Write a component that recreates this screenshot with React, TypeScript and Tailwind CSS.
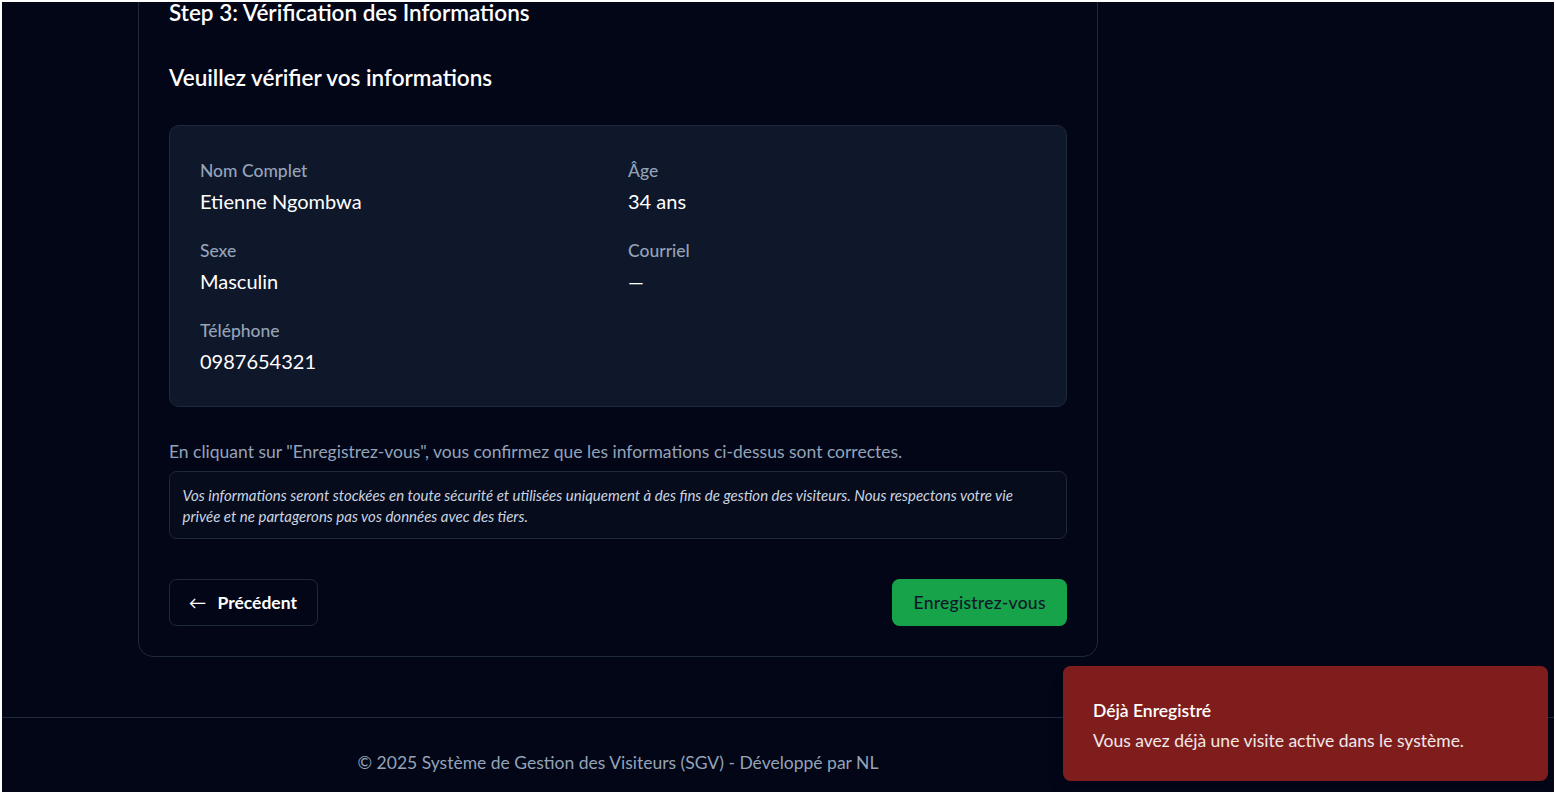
import React from "react";

const fields = [
  { label: "Nom Complet", value: "Etienne Ngombwa" },
  { label: "Âge", value: "34 ans" },
  { label: "Sexe", value: "Masculin" },
  { label: "Courriel", value: "—" },
  { label: "Téléphone", value: "0987654321" },
];

function InfoItem({ label, value }: { label: string; value: string }) {
  return (
    <div>
      <p className="pt-[1.5px] text-sm leading-5 font-medium text-[#94a3b8]">{label}</p>
      <p className="mt-[2.5px] text-base leading-6 text-white">{value}</p>
    </div>
  );
}

function Toast() {
  return (
    <div className="absolute right-[4.8px] bottom-[8.5px] w-[388px] rounded-md bg-[#7f1d1d] px-6 pt-[25.6px] pb-[22.4px] pr-8 shadow-lg">
      <div className="grid gap-1">
        <p className="text-sm leading-5 font-semibold text-white">Déjà Enregistré</p>
        <p className="text-sm leading-5 text-white/90">
          Vous avez déjà une visite active dans le système.
        </p>
      </div>
    </div>
  );
}

export default function App() {
  return (
    <div
      className="h-screen overflow-hidden bg-white p-[2px]"
      style={{ fontFamily: "Lato, 'Noto Sans', sans-serif" }}
    >
      <div className="relative h-full overflow-hidden bg-[#020617] [zoom:1.25]">
        <div className="-mt-[30.6px]">
          <div className="flex">
            <main className="flex w-[985.6px] justify-center">
              <div className="w-[768px] rounded-xl border border-[#1e293b] p-6">
                <h2 className="text-lg leading-7 font-semibold text-white">
                  Step 3: Vérification des Informations
                </h2>
                <h3 className="mt-6 text-lg leading-7 font-semibold text-white">
                  Veuillez vérifier vos informations
                </h3>

                <div className="mt-6 rounded-lg border border-[#1e293b] bg-[#0f172a] p-6">
                  <div className="grid grid-cols-2 gap-x-4 gap-y-4">
                    {fields.map((f) => (
                      <InfoItem key={f.label} label={f.label} value={f.value} />
                    ))}
                  </div>
                </div>

                <p className="mt-[25.6px] text-sm leading-5 text-[#94a3b8]">
                  En cliquant sur "Enregistrez-vous", vous confirmez que les informations
                  ci-dessus sont correctes.
                </p>
                <div className="mt-[6px] rounded-md border border-[#1e293b] bg-[#070c1c] px-[10px] pt-[10px] pb-[9px]">
                  <p className="text-xs leading-[16.8px] text-[#cbd5e1] italic">
                    Vos informations seront stockées en toute sécurité et utilisées uniquement
                    à des fins de gestion des visiteurs. Nous respectons votre vie privée et ne
                    partagerons pas vos données avec des tiers.
                  </p>
                </div>

                <div className="mt-[31.7px] flex items-center justify-between">
                  <button className="flex h-[37.6px] items-center gap-[9px] rounded-md border border-[#1e293b] pr-4 pl-[15px] text-sm font-bold text-white">
                    <span className="font-normal">←</span>
                    <span>Précédent</span>
                  </button>
                  <button className="flex h-[37.6px] items-center rounded-md bg-[#16a34a] px-[17px] text-sm font-medium tracking-[0.2px] text-[#0f172a]">
                    Enregistrez-vous
                  </button>
                </div>
              </div>
            </main>
            <aside className="flex-1" />
          </div>

          <footer className="mt-12 border-t border-[#1e293b] pt-[25.6px] pb-6">
            <p className="w-[985.6px] text-center text-sm leading-5 text-[#94a3b8]">
              © 2025 Système de Gestion des Visiteurs (SGV) - Développé par NL
            </p>
          </footer>
        </div>

        <Toast />
      </div>
    </div>
  );
}
